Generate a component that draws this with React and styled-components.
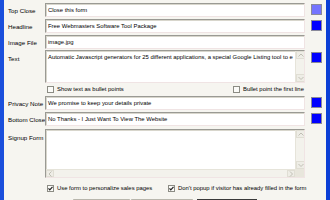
import React from "react";
import styled, { createGlobalStyle } from "styled-components";

const Global = createGlobalStyle`
  html, body { margin: 0; padding: 0; }
  body { background: #f6f5f0; font-family: "Liberation Sans", Arial, sans-serif; }
`;

const Frame = styled.div`
  width: 330px;
  height: 200px;
  box-sizing: border-box;
  border-left: 4px solid #1a4fdc;
  border-right: 4px solid #0b3fd6;
  background: #f6f5f0;
  overflow: hidden;
  padding-top: 3px;
  display: flex;
  flex-direction: column;
  font-size: 5.9px;
  color: #000;
  & > * { flex-shrink: 0; }
`;

const Row = styled.div`
  display: grid;
  grid-template-columns: 41px 260px 21px;
  height: ${(p) => p.$h}px;
  margin-top: ${(p) => p.$mt || 0}px;
`;

const Label = styled.div`
  padding-left: 4px;
  font-size: 6.2px;
  display: flex;
  align-items: ${(p) => (p.$top ? "flex-start" : "center")};
  padding-top: ${(p) => (p.$top ? 5 : 0)}px;
  white-space: nowrap;
`;

const Field = styled.div`
  box-sizing: border-box;
  background: #fff;
  border-style: solid;
  border-width: 1px;
  border-color: #9a9a94 #f0e4e4 #f0e4e4 #9a9a94;
  box-shadow: inset 1px 1px 0 #d8d6cc;
  padding-left: 2px;
  display: flex;
  align-items: center;
  white-space: nowrap;
  overflow: hidden;
`;

const Area = styled.div`
  box-sizing: border-box;
  background: #fff;
  border-style: solid;
  border-width: 1px;
  border-color: #9a9a94 #f0e4e4 #f0e4e4 #9a9a94;
  box-shadow: inset 1px 1px 0 #d8d6cc;
  display: grid;
  grid-template-columns: 1fr 9px;
  grid-template-rows: ${(p) => (p.$hbar ? "1fr 8px" : "1fr")};
  overflow: hidden;
`;

const AreaText = styled.div`
  padding: 3px 0 0 2px;
  white-space: nowrap;
  overflow: hidden;
`;

const VBar = styled.div`
  background: #f3f2ec;
  border-left: 1px solid #e6e4da;
  display: flex;
  flex-direction: column;
  justify-content: space-between;
`;

const HBar = styled.div`
  background: #f3f2ec;
  border-top: 1px solid #e6e4da;
  display: flex;
  justify-content: space-between;
`;

const Arrow = styled.div`
  box-sizing: border-box;
  width: ${(p) => (p.$h ? 8 : 9)}px;
  height: ${(p) => (p.$h ? 7 : 8)}px;
  background: #eeede6;
  border: 1px solid #e0ded4;
  display: flex;
  align-items: center;
  justify-content: center;
`;

const Corner = styled.div`
  background: #e8e6dc;
`;

const SwatchCell = styled.div`
  padding-left: 6px;
  padding-top: ${(p) => p.$pt || 1}px;
`;

const Swatch = styled.div`
  width: 11px;
  height: 11px;
  box-sizing: border-box;
  border: 1px solid #8a8a9a;
  background: ${(p) => p.$c};
`;

const CheckRow = styled.div`
  display: flex;
  align-items: center;
  height: ${(p) => p.$h}px;
  margin-top: ${(p) => p.$mt || 0}px;
  padding-left: 43px;
`;

const CheckItem = styled.div`
  display: flex;
  align-items: center;
  gap: 3px;
  width: ${(p) => (p.$w ? `${p.$w}px` : "auto")};
  white-space: nowrap;
`;

const Box = styled.div`
  width: 7px;
  height: 7px;
  box-sizing: border-box;
  border: 1px solid #8c8c84;
  background: #fbfbf8;
  display: flex;
  align-items: center;
  justify-content: center;
`;

const Buttons = styled.div`
  display: flex;
  margin-top: 4px;
  margin-left: 69px;
  gap: 1px;
`;

const Button = styled.div`
  width: ${(p) => p.$w}px;
  height: 12px;
  box-sizing: border-box;
  border-top: 1px solid ${(p) => (p.$def ? "#3a3a3a" : "#b8b6ac")};
  border-left: 1px solid ${(p) => (p.$def ? "#3a3a3a" : "#d0cec4")};
  border-right: 1px solid ${(p) => (p.$def ? "#3a3a3a" : "#d0cec4")};
  background: #f4f3ee;
  margin-left: ${(p) => p.$ml || 0}px;
`;

const Tri = ({ dir }) => {
  const pts = {
    up: "0.5,3.5 3,1 5.5,3.5",
    down: "0.5,1 3,3.5 5.5,1",
    left: "3.5,0.5 1,3 3.5,5.5",
    right: "1,0.5 3.5,3 1,5.5",
  }[dir];
  const horiz = dir === "left" || dir === "right";
  return (
    <svg width={horiz ? 5 : 6} height={horiz ? 6 : 5} viewBox={horiz ? "0 0 5 6" : "0 0 6 5"}>
      <polyline points={pts} fill="none" stroke="#c0beb4" strokeWidth="1" />
    </svg>
  );
};

const Check = ({ on }) => (
  <Box>
    {on && (
      <svg width="5" height="5" viewBox="0 0 5 5">
        <polyline points="0.5,2.3 1.8,3.8 4.5,0.8" fill="none" stroke="#222" strokeWidth="1.2" />
      </svg>
    )}
  </Box>
);

export default function App() {
  return (
    <>
      <Global />
      <Frame>
        <Row $h={14}>
          <Label>Top Close</Label>
          <Field>Close this form</Field>
          <SwatchCell><Swatch $c="#7474ff" /></SwatchCell>
        </Row>
        <Row $h={14} $mt={2}>
          <Label>Headline</Label>
          <Field>Free Webmasters Software Tool Package</Field>
          <SwatchCell><Swatch $c="#0000ff" /></SwatchCell>
        </Row>
        <Row $h={14} $mt={2}>
          <Label>Image File</Label>
          <Field>image.jpg</Field>
          <SwatchCell />
        </Row>
        <Row $h={33} $mt={1}>
          <Label $top>Text</Label>
          <Area>
            <AreaText>Automatic Javascript generators for 25 different applications, a special Google Listing tool to e</AreaText>
            <VBar>
              <Arrow><Tri dir="up" /></Arrow>
              <Arrow><Tri dir="down" /></Arrow>
            </VBar>
          </Area>
          <SwatchCell $pt={2}><Swatch $c="#0000ff" /></SwatchCell>
        </Row>
        <CheckRow $h={12}>
          <CheckItem $w={186}><Check />Show text as bullet points</CheckItem>
          <CheckItem><Check />Bullet point the first line</CheckItem>
        </CheckRow>
        <Row $h={14} $mt={1}>
          <Label>Privacy Note</Label>
          <Field>We promise to keep your details private</Field>
          <SwatchCell><Swatch $c="#0000ff" /></SwatchCell>
        </Row>
        <Row $h={14} $mt={2}>
          <Label>Bottom Close</Label>
          <Field>No Thanks - I Just Want To View The Website</Field>
          <SwatchCell><Swatch $c="#0000ff" /></SwatchCell>
        </Row>
        <Row $h={49} $mt={3}>
          <Label $top>Signup Form</Label>
          <Area $hbar>
            <AreaText />
            <VBar>
              <Arrow><Tri dir="up" /></Arrow>
              <Arrow><Tri dir="down" /></Arrow>
            </VBar>
            <HBar>
              <Arrow $h><Tri dir="left" /></Arrow>
              <Arrow $h><Tri dir="right" /></Arrow>
            </HBar>
            <Corner />
          </Area>
          <SwatchCell />
        </Row>
        <CheckRow $h={14} $mt={3}>
          <CheckItem $w={121}><Check on />Use form to personalize sales pages</CheckItem>
          <CheckItem><Check on />Don't popup if visitor has already filled in the form</CheckItem>
        </CheckRow>
        <Buttons>
          <Button $w={57} />
          <Button $w={62} />
          <Button $w={60} $def $ml={3} />
        </Buttons>
      </Frame>
    </>
  );
}
